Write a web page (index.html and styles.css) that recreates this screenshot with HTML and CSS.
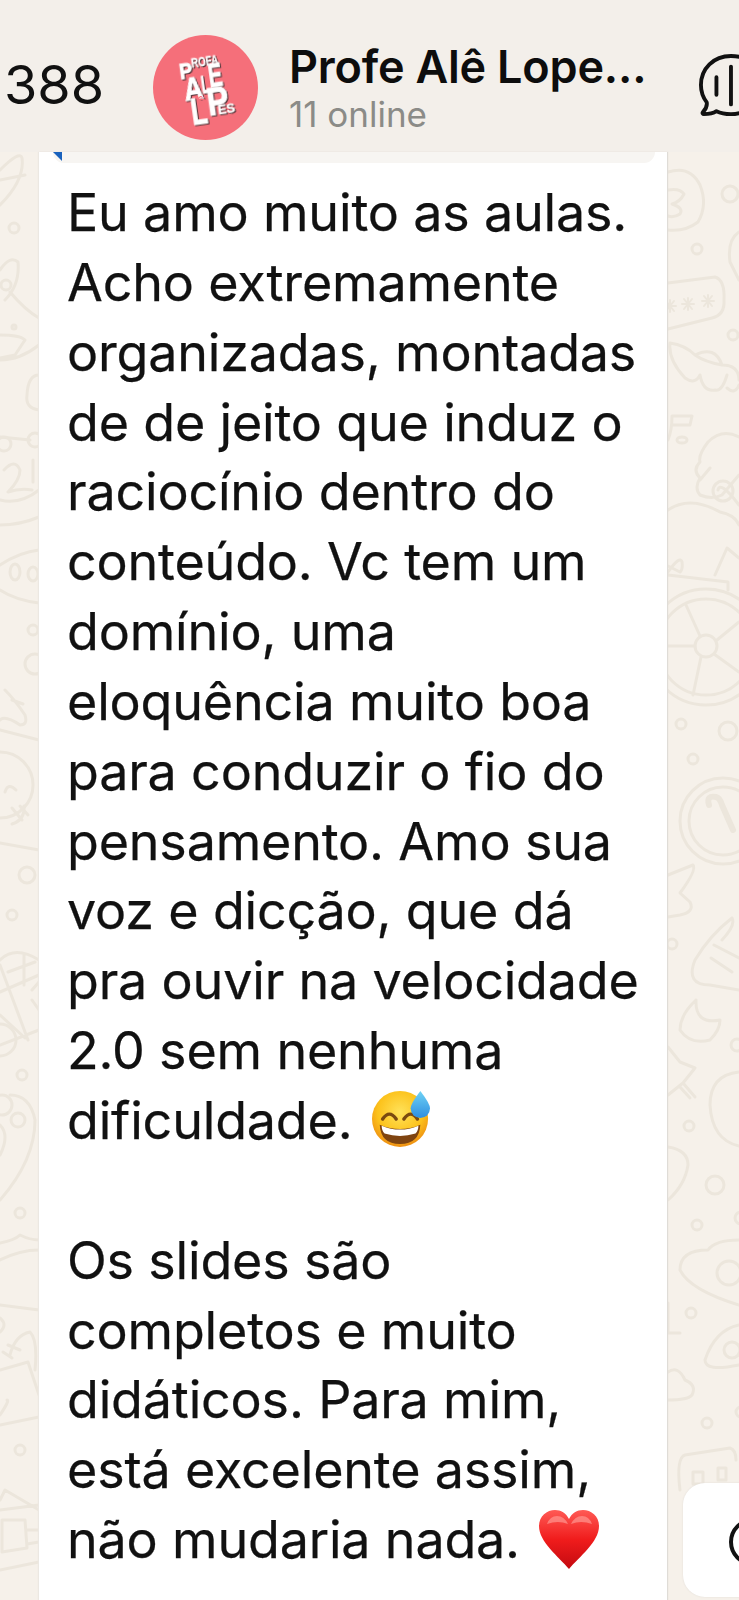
FILE: index.html
```html
<!DOCTYPE html>
<html lang="pt">
<head>
<meta charset="utf-8">
<title>Profe Alê Lopes</title>
<link rel="stylesheet" href="styles.css">
</head>
<body>
<div class="screen">
  <svg class="doodles" viewBox="0 0 739 1600" aria-hidden="true">
    <g fill="none">
      <!-- right gutter -->
      <path d="M668 172Q690 165 700 185Q708 205 698 222Q685 232 668 230M668 190Q680 188 684 194Q680 202 672 204Q684 208 680 214Q674 218 668 216"/>
      <circle cx="730" cy="194" r="8"/><circle cx="697" cy="249" r="5"/>
      <path d="M739 232Q727 240 730 262L739 280"/>
      <path d="M668 283L715 277Q725 280 724 300Q725 315 712 318L668 329"/>
      <path class="thin" d="M664 306H676M670 300V312M666 301L674 311M674 301L666 311M682 304H694M688 298V310M684 299L692 309M692 299L684 309M702 301H714M708 295V307M704 296L712 306M712 296L704 306"/>
      <circle cx="733" cy="335" r="5"/>
      <path d="M670 343Q685 345 695 355Q715 345 722 365Q739 365 739 380M670 343Q668 360 685 378Q695 385 700 375M700 375Q703 392 715 390Q722 392 727 375M727 388Q735 395 739 385M695 355Q705 362 722 365"/>
      <path d="M672 416H692L690 425H672M672 416Q672 430 668 440"/>
      <ellipse cx="682" cy="440" rx="5" ry="3"/>
      <path d="M739 437Q722 428 708 442Q698 455 700 462Q692 470 700 478Q694 488 700 495Q712 500 722 495L739 475M710 468L700 480M739 505Q720 480 718 490"/>
      <circle cx="723" cy="491" r="10"/>
      <path d="M668 510Q690 495 720 512Q735 515 739 525"/>
      <path d="M668 572Q680 555 682 562Q683 570 680 572L668 566M668 575L728 582V590M715 575L727 548L739 558"/>
      <circle cx="706" cy="646" r="11"/><circle cx="706" cy="647" r="58"/><circle cx="706" cy="647" r="48"/>
      <path d="M695 646H668M700 636L686 605M717 640L739 622M714 654L739 672M701 657L693 695"/>
      <circle cx="681" cy="724" r="5"/><circle cx="728" cy="731" r="9"/><circle cx="693" cy="759" r="5"/>
      <circle cx="723" cy="821" r="43"/><circle cx="723" cy="821" r="34"/>
      <path d="M709 805Q706 795 716 797Q720 798 722 805L733 830" stroke-width="6"/>
      <path d="M668 875L693 865Q697 870 680 893L690 902Q695 912 680 915L668 917"/>
      <circle cx="672" cy="944" r="5"/>
      <path d="M732 918Q710 935 695 960Q685 985 710 985L739 990M714 945L739 958M711 958L732 972M732 918Q736 925 722 940"/>
      <path d="M696 1000Q680 1015 680 1030Q690 1045 710 1040Q720 1030 720 1020Q695 1025 696 1000"/>
      <path d="M668 1047L680 1062L695 1068L683 1083L668 1095M683 1083L695 1097M680 1087L690 1098"/>
      <path d="M739 1072Q710 1075 710 1105Q712 1140 739 1146"/><circle cx="737" cy="1045" r="6"/>
      <circle cx="689" cy="1126" r="5"/>
      <path d="M668 1147Q688 1150 688 1165Q685 1185 668 1200"/>
      <circle cx="715" cy="1185" r="9"/><circle cx="697" cy="1225" r="5"/><circle cx="741" cy="1218" r="6"/>
      <path d="M739 1240Q715 1240 708 1250Q680 1250 680 1270Q690 1290 739 1305"/><circle cx="729" cy="1273" r="12"/>
      <circle cx="691" cy="1313" r="5"/>
      <path d="M739 1325Q715 1330 705 1360Q705 1372 739 1365"/><circle cx="732" cy="1350" r="8"/>
      <path d="M668 1303V1333H680"/>
      <path d="M668 1372Q678 1365 685 1380Q697 1385 692 1395Q688 1400 668 1400"/>
      <circle cx="707" cy="1423" r="5"/><circle cx="741" cy="1412" r="5"/>
      <path d="M680 1490Q676 1458 685 1455L730 1448Q736 1450 736 1460"/>
      <rect x="693" y="1472" width="10" height="12"/><rect x="718" y="1468" width="8" height="12"/>
      <!-- left gutter -->
      <path d="M0 170Q20 150 22 158Q25 180 0 205M0 180L25 175"/>
      <circle cx="14" cy="228" r="5"/>
      <path d="M0 270Q10 255 18 262Q20 285 5 300M10 292Q25 310 39 318"/><circle cx="6" cy="285" r="5"/>
      <path d="M0 335Q20 335 25 340L15 355L0 358M39 345Q20 360 0 360"/>
      <circle cx="14" cy="327" r="2"/>
      <path d="M39 375Q28 375 27 395Q25 408 39 410"/>
      <path d="M0 437L30 440"/><circle cx="4" cy="444" r="7"/><circle cx="35" cy="440" r="7"/>
      <path d="M4 470Q15 458 20 470Q20 480 8 492Q20 488 32 490M33 460V482M0 500Q20 505 39 490M0 525Q20 525 39 517"/>
      <path d="M0 565Q20 552 39 550M0 590Q15 600 39 603"/>
      <ellipse cx="15" cy="572" rx="5" ry="8"/><ellipse cx="33" cy="574" rx="5" ry="7"/>
      <circle cx="33" cy="630" r="5"/><circle cx="35" cy="664" r="10"/>
      <path d="M5 690Q15 700 25 715Q28 725 20 725Q5 715 0 720M12 700L23 704M0 730L39 740"/>
      <circle cx="0" cy="785" r="33"/>
      <path d="M5 792Q8 782 16 790M12 808L22 820M20 806L28 815M12 824Q25 820 24 806"/>
      <path d="M0 843L39 850"/>
      <circle cx="27" cy="875" r="8"/><circle cx="12" cy="915" r="5"/>
      <path d="M0 960Q15 945 39 960M8 972L35 962M24 955V985M0 992L39 975M0 965L28 1040M32 990L39 982M32 1000L39 1010M0 1015L25 1038M0 1045L39 1030"/>
      <circle cx="0" cy="1040" r="16"/>
      <circle cx="22" cy="1075" r="5"/><circle cx="18" cy="1120" r="7"/><circle cx="2" cy="1105" r="10"/>
      <path d="M10 1095Q30 1095 35 1120Q35 1160 0 1200M0 1125Q10 1135 0 1155"/>
      <circle cx="20" cy="1213" r="5"/>
      <path d="M0 1243Q15 1240 20 1235Q30 1240 39 1240M0 1260Q20 1250 39 1250M0 1305L39 1310M0 1318Q8 1325 0 1332"/>
      <path d="M10 1355Q15 1335 30 1332Q38 1340 35 1370M0 1370L28 1362L39 1395M0 1425L39 1417M8 1345L20 1350M3 1352L12 1358M0 1415Q10 1400 7 1400"/>
      <circle cx="20" cy="1450" r="5"/>
      <path d="M0 1500L5 1490L39 1510M0 1510L39 1505M2 1520H25L27 1548L2 1552ZM27 1530H39M27 1544L39 1542M0 1570L39 1562"/>
    </g>
  </svg>

  <header class="topbar">
    <span class="count">388</span>
    <svg class="avatar" viewBox="0 0 105 105" role="img" aria-label="Profa Alê Lopes">
      <circle cx="52.5" cy="52.5" r="52.5" fill="#f56f7a"/>
      <g class="logo" transform="rotate(-8 52 54)">
        <text x="29" y="41" font-size="22" textLength="13" lengthAdjust="spacingAndGlyphs">P</text>
        <text class="logo-sm" x="42" y="31" font-size="13" textLength="27" lengthAdjust="spacingAndGlyphs">ROFA</text>
        <text x="31" y="63" font-size="32" textLength="19" lengthAdjust="spacingAndGlyphs">A</text>
        <text x="49" y="58" font-size="24" textLength="8" lengthAdjust="spacingAndGlyphs">L</text>
        <text x="57" y="53" font-size="34" textLength="14" lengthAdjust="spacingAndGlyphs">E</text>
        <text x="35" y="88" font-size="36" textLength="16" lengthAdjust="spacingAndGlyphs">L</text>
        <text x="52" y="81" font-size="39" textLength="22" lengthAdjust="spacingAndGlyphs">P</text>
        <text class="logo-sm" x="62" y="81" font-size="12" textLength="17" lengthAdjust="spacingAndGlyphs">ES</text>
      </g>
      <text class="logo-o" x="44" y="72" font-size="12" transform="rotate(-8 47 68)">Ô</text>
    </svg>
    <div class="who">
      <div class="name">Profe Alê Lope...</div>
      <div class="status">11 online</div>
    </div>
    <svg class="call" viewBox="0 0 64 64" aria-hidden="true">
      <path d="M33 2C15 2 2 15 2 32c0 8 3 14 6 18 .6 4-2 8-4 10-.8 1 0 2 1 2 5 0 10-1 13-3 4 2 9 3 15 3 18 0 30-13 30-30S51 2 33 2Z"/>
      <path d="M18 24V42M33 13V52"/>
    </svg>
  </header>

  <main class="chat">
    <article class="bubble">
      <div class="quote"></div>
      <p class="msg">Eu amo muito as aulas.<br>Acho extremamente<br>organizadas, montadas<br>de de jeito que induz o<br>raciocínio dentro do<br>conteúdo. Vc tem um<br>domínio, uma<br>eloquência muito boa<br>para conduzir o fio do<br>pensamento. Amo sua<br>voz e dicção, que dá<br>pra ouvir na velocidade<br>2.0 sem nenhuma<br>dificuldade. <svg class="emoji" viewBox="0 0 60 60" role="img" aria-label="😅">
        <defs>
          <radialGradient id="face" cx="50%" cy="38%" r="62%"><stop offset="0" stop-color="#ffe25a"/><stop offset=".65" stop-color="#fcc21b"/><stop offset="1" stop-color="#ee8f12"/></radialGradient>
          <linearGradient id="drop" x1="0" y1="0" x2="0" y2="1"><stop offset="0" stop-color="#6fd2f5"/><stop offset="1" stop-color="#2f8fe0"/></linearGradient>
        </defs>
        <circle cx="29" cy="31" r="29" fill="url(#face)"/>
        <path d="M11 31q7-10 14 0M33 31q7-10 14 0" fill="none" stroke="#7a4a10" stroke-width="3.6" stroke-linecap="round"/>
        <path d="M8 37q21 9 42 0q-1 20-21 20T8 37Z" fill="#7f4410"/>
        <path d="M10 38q19 8 38 0q0 5-3 8q-16 5-32 0q-3-3-3-8Z" fill="#fff"/>
        <path d="M50 2q10 13 10 18a10 10 0 0 1-20 0q0-5 10-18Z" fill="url(#drop)"/>
      </svg><br><br>Os slides são<br>completos e muito<br>didáticos. Para mim,<br>está excelente assim,<br>não mudaria nada. <svg class="emoji heart" viewBox="0 0 60 60" role="img" aria-label="❤️">
        <defs>
          <linearGradient id="red" x1="0" y1="0" x2="0" y2="1"><stop offset="0" stop-color="#ff5a55"/><stop offset=".5" stop-color="#f01c1c"/><stop offset="1" stop-color="#c40a10"/></linearGradient>
        </defs>
        <path d="M30 59C20 47 0 32 0 16 0 6 8 0 16 0c6 0 11 3 14 9 3-6 8-9 14-9 8 0 16 6 16 16 0 16-20 31-30 43Z" fill="url(#red)"/>
        <path d="M8 14q3-8 10-8q7 0 11 8q-10-4-21 0ZM32 14q4-8 11-8q7 0 10 8q-11-4-21 0Z" fill="#ff9d96" opacity=".65"/>
      </svg></p>
    </article>
  </main>

  <div class="float"><span class="float-ring"></span></div>
</div>
</body>
</html>
```

FILE: styles.css
```css
* { box-sizing: border-box; }
html, body { margin: 0; padding: 0; }
body { background: #f6f1ea; font-family: Inter, "Liberation Sans", sans-serif; color: #111; }

.screen {
  position: relative;
  width: 739px;
  height: 1600px;
  overflow: hidden;
  background: #f6f1ea;
}

.doodles {
  position: absolute;
  inset: 0;
  width: 739px;
  height: 1600px;
  stroke: #ece6dc;
  stroke-width: 3;
  stroke-linecap: round;
  stroke-linejoin: round;
}
.doodles .thin { stroke-width: 2; }

.topbar {
  position: relative;
  display: flex;
  align-items: center;
  height: 152px;
  padding: 22px 0 0 4px;
  background: #f3efea;
}
.count { width: 149px; margin-bottom: 4px; font-size: 54px; line-height: 1; font-weight: 400; color: #111; flex: none; }
.avatar { width: 105px; height: 105px; flex: none; }
.logo text { font-family: "Liberation Sans", sans-serif; font-weight: 700; fill: #fff; stroke: #fff; stroke-width: .9px; }
.logo .logo-sm { stroke-width: .3px; }
.logo { filter: drop-shadow(1px 1.5px 0 #4a3034); }
.logo-o { font-family: "Liberation Sans", sans-serif; font-weight: 700; fill: #f56f7a; }

.who { margin: 2px 0 0 31px; width: 398px; flex: none; }
.name { font-size: 45px; line-height: 52px; font-weight: 600; color: #0d0d0d; letter-spacing: -.2px; white-space: nowrap; }
.status { font-size: 35px; line-height: 42px; color: #8b8b87; }

.call {
  flex: none;
  width: 64px;
  height: 62px;
  margin: 0 0 4px 11px;
  fill: none;
  stroke: #111;
  stroke-width: 4;
  stroke-linecap: round;
  stroke-linejoin: round;
}

.chat { position: relative; padding: 0 72px 0 39px; }

.bubble {
  height: 1448px;
  background: #fff;
  box-shadow: 1px 0 1px #dfdcd7, -1px 0 1px #ece8e2;
}
.quote {
  position: relative;
  height: 11px;
  margin: 0 12px 0 14px;
  background: #f7f5f2;
  border-radius: 0 0 12px 12px;
}
.quote::before {
  content: "";
  position: absolute;
  left: 0;
  top: 0;
  width: 9px;
  height: 9px;
  background: #1a62bd;
  clip-path: polygon(0 0, 100% 0, 100% 100%);
}

.msg {
  margin: 15px 0 0;
  padding-left: 28px;
  font-size: 52px;
  line-height: 69.85px;
  letter-spacing: -.17px;
  -webkit-text-stroke: .25px #111;
  color: #111;
  white-space: nowrap;
}
.emoji { display: inline-block; width: 58px; height: 58px; vertical-align: -8px; margin-left: 5px; }
.heart { width: 60px; height: 60px; vertical-align: -12px; }

.float {
  position: absolute;
  left: 683px;
  top: 1483px;
  width: 100px;
  height: 114px;
  background: #fff;
  border-radius: 22px;
  box-shadow: 0 0 2px #e0dcd6;
}
.float-ring {
  position: absolute;
  left: 46px;
  top: 35px;
  width: 48px;
  height: 48px;
  border: 4px solid #111;
  border-radius: 50%;
}
```
